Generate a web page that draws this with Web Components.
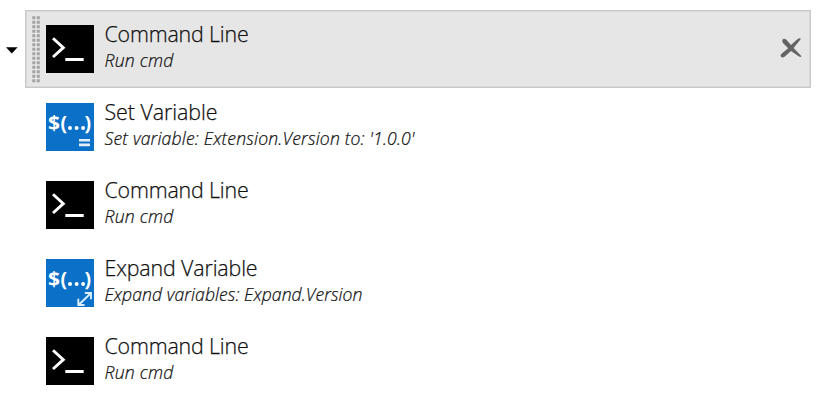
<!DOCTYPE html>
<html lang="en"><head><meta charset="utf-8"><title>Build steps</title>
<style>body{margin:0;background:#fff;color:#101010;font-family:"Open Sans","Noto Sans",sans-serif}</style></head>
<body>
<task-list>
<task-row selected kind="cmd" tw="144" sw="69"><span slot="title">Command Line</span><span slot="sub">Run cmd</span></task-row>
<task-row kind="set" tw="113" sw="310"><span slot="title">Set Variable</span><span slot="sub">Set variable: Extension.Version to: '1.0.0'</span></task-row>
<task-row kind="cmd" tw="144" sw="69"><span slot="title">Command Line</span><span slot="sub">Run cmd</span></task-row>
<task-row kind="expand" tw="153" sw="258"><span slot="title">Expand Variable</span><span slot="sub">Expand variables: Expand.Version</span></task-row>
<task-row kind="cmd" tw="144" sw="69"><span slot="title">Command Line</span><span slot="sub">Run cmd</span></task-row>
</task-list>
<script>
customElements.define('task-list', class extends HTMLElement {
  constructor() {
    super();
    this.attachShadow({mode: 'open'}).innerHTML = `<style>:host{display:flex;flex-direction:column;box-sizing:border-box;height:406px;padding-top:10px;overflow:hidden}</style><slot></slot>`;
  }
});

customElements.define('task-icon', class extends HTMLElement {
  connectedCallback() {
    const kind = this.getAttribute('kind');
    const variable = `<rect width="48" height="48" fill="#0b70c7"/>
      <text x="2" y="26.8" textLength="12" lengthAdjust="spacingAndGlyphs" font-size="19.5" font-weight="700">$</text>
      <text x="14.6" y="26.6" font-size="20" font-weight="700" textLength="6.6" lengthAdjust="spacingAndGlyphs">(</text>
      <circle cx="24" cy="25" r="2"/><circle cx="30.6" cy="25" r="2"/><circle cx="37.1" cy="25" r="2"/>
      <text x="38.6" y="26.6" font-size="20" font-weight="700" textLength="6.6" lengthAdjust="spacingAndGlyphs">)</text>`;
    const art = {
      cmd: `<rect width="48" height="48" fill="#000"/><path d="M7 13.2L17.3 22.7L7 32" fill="none" stroke="#fff" stroke-width="2.9"/><path d="M19.3 33h18.4v3H19.3z"/>`,
      set: variable + `<path d="M33 36h11v2.6H33zM33 40.6h11v2.6H33z" fill="#e3effa"/>`,
      expand: variable + `<path d="M33 45.5L44.5 34.5M38.8 34H45v6.2M32.3 39.8V46h6.2" fill="none" stroke="#dceefb" stroke-width="1.9"/>`
    }[kind];
    this.attachShadow({mode: 'open'}).innerHTML = `<style>:host{display:block;width:48px;height:48px}svg{display:block;fill:#fff;font-family:"Open Sans",sans-serif}</style><svg width="48" height="48" viewBox="0 0 48 48">${art}</svg>`;
  }
});

customElements.define('task-row', class extends HTMLElement {
  connectedCallback() {
    const sel = this.hasAttribute('selected');
    const root = this.attachShadow({mode: 'open'});
    root.innerHTML = `<style>
      :host{display:grid;grid-template-columns:25px 786px;height:78px;flex:none}
      .toggle{display:block;margin:37px 0 0 5px}
      .card{display:flex;box-sizing:border-box;height:78px;border:1px solid transparent}
      :host([selected]) .card{background:#e6e6e6;border-color:#c8c8c8;box-shadow:inset 0 0 0 1px #d9d9d9}
      .grip{width:8px;height:67px;margin:5px 6px 0 6px;flex:none}
      task-icon{margin-top:14px;flex:none}
      .text{margin:8px 0 0 10.5px;flex:1;white-space:nowrap}
      .title{font-size:21.4px;font-weight:300;line-height:29px;width:max-content;-webkit-text-stroke:.25px currentColor}
      .sub{font-size:17.6px;font-style:italic;font-weight:300;line-height:24px;width:max-content;-webkit-text-stroke:.22px currentColor}
      .close{margin:26px 7px 0 0;flex:none}
    </style>
    <div>${sel ? `<svg class="toggle" width="14" height="8" viewBox="0 0 14 8"><path d="M1 .2h11.6L6.8 6.4z"/></svg>` : ''}</div>
    <div class="card">
      <svg class="grip" viewBox="0 0 8 67">${sel ? Array.from({length: 15}, (_, i) => `<path d="M.3 ${(i * 4.5 + .3).toFixed(1)}h3v3h-3zM4.8 ${(i * 4.5 + .3).toFixed(1)}h3v3h-3z" fill="#a3a3a3"/>`).join('') : ''}</svg>
      <task-icon kind="${this.getAttribute('kind')}"></task-icon>
      <div class="text"><div class="title"><slot name="title"></slot></div><div class="sub"><slot name="sub"></slot></div></div>
      ${sel ? `<svg class="close" width="24" height="24" viewBox="0 0 24 24"><path d="M3.6 2.4Q5.2.8 7.4 2.8L12 8L18 2.6Q20.5.6 22 1.8L14.6 11L22.3 19Q22 20.8 20 19.6L12 14L5.6 19.8Q3.2 21.4 1.7 19.3Q1 18 2.8 16.4L9.2 11.2L4 6Q2.6 4 3.6 2.4z" fill="#646464"/></svg>` : ''}
    </div>`;
    // Spread the letters of each line over its nominal width.
    for (const [cls, attr] of [['title', 'tw'], ['sub', 'sw']]) {
      const el = root.querySelector('.' + cls);
      const n = this.querySelector(`[slot=${cls}]`).textContent.length;
      el.style.letterSpacing = (this.getAttribute(attr) - el.getBoundingClientRect().width) / n + 'px';
    }
  }
});
</script>
</body></html>
